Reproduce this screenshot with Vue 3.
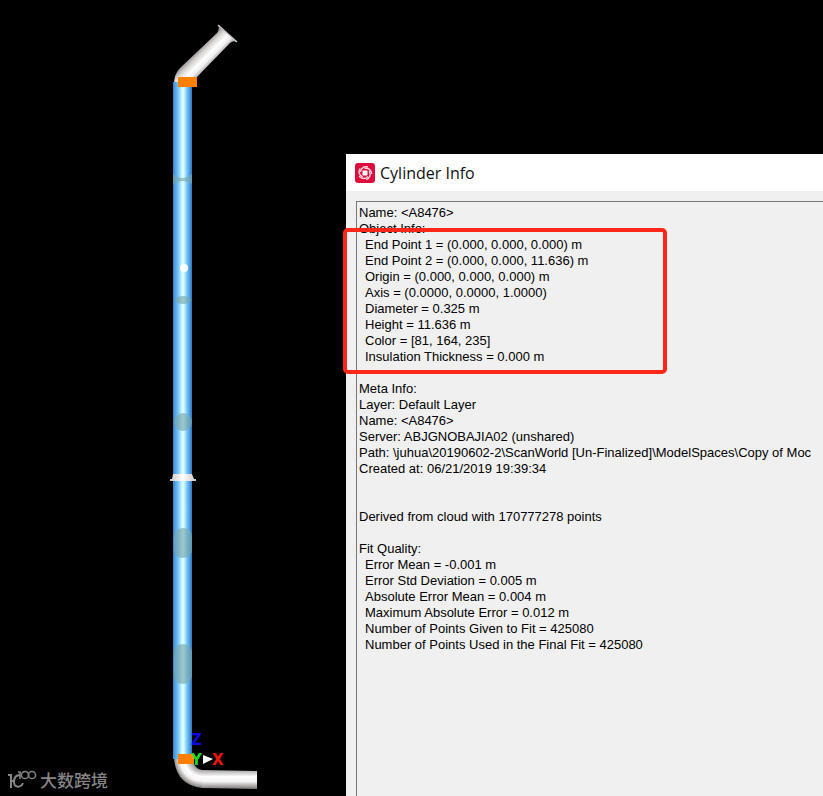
<template>
  <div class="workspace">
    <div class="viewport">
      <svg class="scene" width="346" height="796" viewBox="0 0 346 796">
        <defs>
          <linearGradient id="pipeBlue" x1="0" x2="1" y1="0" y2="0">
            <stop offset="0" stop-color="#397fb8" />
            <stop offset="0.12" stop-color="#51a4eb" />
            <stop offset="0.3" stop-color="#80cbf8" />
            <stop offset="0.45" stop-color="#cdf6ff" />
            <stop offset="0.56" stop-color="#dcffff" />
            <stop offset="0.72" stop-color="#80cbf8" />
            <stop offset="0.88" stop-color="#4a9ce4" />
            <stop offset="1" stop-color="#3275b5" />
          </linearGradient>
          <linearGradient id="elbowTop" gradientUnits="userSpaceOnUse" x1="199" y1="47" x2="213" y2="61">
            <stop offset="0" stop-color="#858181" />
            <stop offset="0.3" stop-color="#d5d1d1" />
            <stop offset="0.6" stop-color="#ffffff" />
            <stop offset="0.8" stop-color="#f2f0f0" />
            <stop offset="1" stop-color="#b5b1b1" />
          </linearGradient>
          <linearGradient id="armBottom" x1="0" x2="0" y1="0" y2="1">
            <stop offset="0" stop-color="#a8a4a4" />
            <stop offset="0.35" stop-color="#ffffff" />
            <stop offset="0.6" stop-color="#f6f4f4" />
            <stop offset="1" stop-color="#777373" />
          </linearGradient>
          <radialGradient id="elbowBottom" gradientUnits="userSpaceOnUse" cx="202" cy="759" r="29">
            <stop offset="0.38" stop-color="#a8a4a4" />
            <stop offset="0.6" stop-color="#ffffff" />
            <stop offset="0.76" stop-color="#f6f4f4" />
            <stop offset="1" stop-color="#777373" />
          </radialGradient>
          <linearGradient id="flange" x1="0" x2="1" y1="0" y2="0">
            <stop offset="0" stop-color="#c9c5c5" />
            <stop offset="0.5" stop-color="#ffffff" />
            <stop offset="1" stop-color="#c9c5c5" />
          </linearGradient>
        </defs>

        <!-- upper elbow -->
        <path d="M174 84 Q174 74 180 68 L217 33 Q220 29 218 25 L237 42 Q233 40 230 43 L197 77 V84 Z" fill="url(#elbowTop)" />
        <path d="M218 25 L237 42" stroke="#c8c4c4" stroke-width="1.5" />

        <!-- lower elbow -->
        <path d="M174 758 H192 Q194 769 202 770 V788 Q176 785 174 758 Z" fill="url(#elbowBottom)" />
        <path d="M202 770 L257 771 V789 L202 788 Z" fill="url(#armBottom)" />

        <!-- main pipe -->
        <rect x="173" y="82" width="19" height="677" fill="url(#pipeBlue)" />
        <g fill="#7aa8ac" fill-opacity="0.65">
          <path d="M173 174 Q182 182 192 174 V184 Q182 178 173 184 Z" />
          <ellipse cx="183" cy="300" rx="8" ry="4" />
          <circle cx="183" cy="422" r="9" />
          <rect x="174" y="528" width="18" height="30" rx="9" ry="8" />
          <rect x="174" y="644" width="18" height="40" rx="9" ry="8" />
        </g>
        <circle cx="184" cy="268" r="4" fill="#fff" />

        <!-- flange ring -->
        <path d="M173 474 H192 L194 479 H196 V481 H170 V479 H172 Z" fill="url(#flange)" />

        <!-- joint markers -->
        <rect x="178" y="77" width="19" height="10" fill="#ff8000" />
        <rect x="178" y="754" width="16" height="10" fill="#ff8000" />

        <!-- axis triad -->
        <path d="M203 755 L213 759 L203 764 Z" fill="#fff" />
        <g class="axis">
          <text x="191" y="745" fill="#0a0ae0">Z</text>
          <text x="191" y="765" fill="#19d52c">Y</text>
          <text x="212" y="765" fill="#f01414">X</text>
        </g>
      </svg>

      <div class="watermark">
        <svg width="29" height="20" viewBox="0 0 29 20" fill="none" stroke="#858585" stroke-width="2">
          <path d="M0 5 H3 V18 M12 5 C8 5 6 8 6 12 C6 18 13 18 15 13" />
          <path d="M4 11 H7" />
          <path d="M10 2 H12 V9" stroke-width="1.5" />
          <circle cx="17" cy="5" r="3.6" stroke-width="1.5" />
          <circle cx="24" cy="5" r="3.6" stroke-width="1.5" />
        </svg>
        <span>大数跨境</span>
      </div>
    </div>

    <section class="dialog" role="dialog" aria-labelledby="dialog-title">
      <header class="title-bar">
        <svg class="app-icon" width="20" height="20" viewBox="0 0 20 20">
          <rect width="20" height="20" rx="3" fill="#dc0d3c" />
          <g fill="none" stroke="#ffd5df" stroke-width="1.4">
            <path v-for="angle in angles" :key="angle" d="M5.5 9 C6 5 9 3 13 4" :transform="`rotate(${angle} 10 10)`" />
          </g>
          <rect x="7.5" y="7.5" width="5" height="5" rx="1" fill="#fff" />
        </svg>
        <h1 id="dialog-title">Cylinder Info</h1>
      </header>

      <div class="dialog-body">
        <div class="info-panel">
          <p>Name: &lt;A8476&gt;</p>
          <p>Object Info:</p>
          <div class="group highlighted">
            <p v-for="line in objectInfo" :key="line">{{ line }}</p>
          </div>

          <div class="block">
            <p v-for="line in metaInfo" :key="line">{{ line }}</p>
          </div>

          <p class="derived">Derived from cloud with 170777278 points</p>

          <div class="block">
            <p>Fit Quality:</p>
            <div class="group">
              <p v-for="line in fitQuality" :key="line">{{ line }}</p>
            </div>
          </div>
        </div>
      </div>
    </section>
  </div>
</template>

<script setup>
const angles = [0, 72, 144, 216, 288];

const objectInfo = [
  'End Point 1 = (0.000, 0.000, 0.000) m',
  'End Point 2 = (0.000, 0.000, 11.636) m',
  'Origin = (0.000, 0.000, 0.000) m',
  'Axis = (0.0000, 0.0000, 1.0000)',
  'Diameter = 0.325 m',
  'Height = 11.636 m',
  'Color = [81, 164, 235]',
  'Insulation Thickness = 0.000 m'
];

const metaInfo = [
  'Meta Info:',
  'Layer: Default Layer',
  'Name: <A8476>',
  'Server: ABJGNOBAJIA02 (unshared)',
  'Path: \\juhua\\20190602-2\\ScanWorld [Un-Finalized]\\ModelSpaces\\Copy of Moc',
  'Created at: 06/21/2019 19:39:34'
];

const fitQuality = [
  'Error Mean = -0.001 m',
  'Error Std Deviation = 0.005 m',
  'Absolute Error Mean = 0.004 m',
  'Maximum Absolute Error = 0.012 m',
  'Number of Points Given to Fit = 425080',
  'Number of Points Used in the Final Fit = 425080'
];
</script>

<style>
body {
  margin: 0;
  background: #000;
}
</style>

<style scoped>
.workspace {
  display: flex;
  min-height: 100vh;
  background: #000;
  overflow: hidden;
}

.viewport {
  position: relative;
  flex: none;
}

.scene {
  display: block;
}

.axis {
  font: bold 15px "DejaVu Sans", sans-serif;
}

.watermark {
  position: absolute;
  left: 8px;
  bottom: 4px;
  display: flex;
  align-items: center;
  gap: 3px;
  color: #858585;
  font: 500 17px/24px "Noto Sans CJK SC", sans-serif;
}

.dialog {
  flex: 1;
  min-width: 0;
  display: flex;
  flex-direction: column;
  margin-top: 154px;
  background: #f0f0f0;
}

.title-bar {
  display: flex;
  align-items: center;
  gap: 5px;
  height: 37px;
  padding-left: 9px;
  background: #fff;
}

.title-bar h1 {
  margin: 0;
  color: #111;
  font: 16px/24px "Open Sans", "Noto Sans", sans-serif;
}

.dialog-body {
  flex: 1;
  display: flex;
  padding: 10px 0 0 10px;
}

.info-panel {
  flex: 1;
  min-width: 0;
  padding: 3px 0 0 2px;
  border-top: 1px solid #777;
  border-left: 1px solid #777;
  color: #000;
  font: 13px/16px "Liberation Sans", Arial, sans-serif;
  white-space: nowrap;
}

.info-panel p {
  margin: 0;
}

.group {
  padding-left: 6px;
}

.highlighted {
  position: relative;
}

/* red frame drawn over the object values */
.highlighted::after {
  content: "";
  position: absolute;
  box-sizing: border-box;
  top: -9px;
  bottom: -9px;
  left: -16px;
  width: 324px;
  border: 4px solid #fb2819;
  border-radius: 5px;
}

.block {
  margin-top: 16px;
}

.derived {
  padding-top: 32px;
}
</style>
